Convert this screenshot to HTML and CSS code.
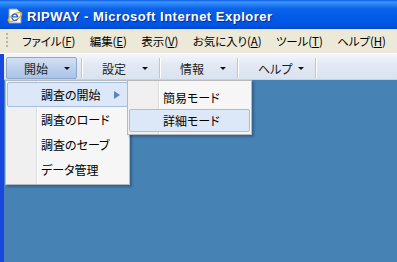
FILE: index.html
```html
<!DOCTYPE html>
<html lang="ja">
<head>
  <meta charset="UTF-8" />
  <title>RIPWAY - Microsoft Internet Explorer</title>
  <link rel="stylesheet" href="styles.css">
</head>
<body>
  <div class="window">
    <div class="titlebar">
      <svg class="ie-icon" width="16" height="16" viewBox="0 0 16 16">
        <path d="M2 1h8l4 4v10H2z" fill="#fff" stroke="#8a9bb8" stroke-width="1"/>
        <ellipse cx="8" cy="9" rx="7.5" ry="3" fill="none" stroke="#f2b01e" stroke-width="1.4" transform="rotate(-30 8 9)"/>
        <path d="M4.5 9.5h7c0-2.4-1.6-4-3.6-4S4.3 7.2 4.3 9.3c0 2.2 1.6 3.9 3.7 3.9 1.5 0 2.6-.7 3.2-1.9H9.6c-.4.5-.9.8-1.6.8-1.1 0-1.9-.8-2-1.9zm1.4-1.3c.2-.9.9-1.5 1.9-1.5s1.7.6 1.8 1.5z" fill="#1d64d8"/>
      </svg>
      <span class="title-text">RIPWAY - Microsoft Internet Explorer</span>
    </div>

    <div class="menubar">
      <span class="grip"></span>
      <span class="menu-item">ファイル(<u>F</u>)</span>
      <span class="menu-item">編集(<u>E</u>)</span>
      <span class="menu-item">表示(<u>V</u>)</span>
      <span class="menu-item">お気に入り(<u>A</u>)</span>
      <span class="menu-item">ツール(<u>T</u>)</span>
      <span class="menu-item">ヘルプ(<u>H</u>)</span>
    </div>

    <div class="frame">
      <div class="toolbar">
        <div class="tool-btn active"><span>開始</span><i class="caret"></i></div>
        <span class="sep"></span>
        <div class="tool-btn"><span>設定</span><i class="caret"></i></div>
        <span class="sep"></span>
        <div class="tool-btn"><span>情報</span><i class="caret"></i></div>
        <span class="sep"></span>
        <div class="tool-btn"><span>ヘルプ</span><i class="caret"></i></div>
        <span class="sep"></span>
      </div>

      <div class="content">
        <ul class="popup main-menu">
          <li class="hover">調査の開始<i class="sub-arrow"></i></li>
          <li>調査のロード</li>
          <li>調査のセーブ</li>
          <li>データ管理</li>
        </ul>
        <ul class="popup sub-menu">
          <li>簡易モード</li>
          <li class="hover">詳細モード</li>
        </ul>
      </div>
    </div>
  </div>
</body>
</html>
```

FILE: styles.css
```css
body {
  margin: 0;
  width: 397px;
  height: 262px;
  overflow: hidden;
  font-family: "Noto Sans CJK JP", sans-serif;
  font-size: 12px;
  font-feature-settings: "palt";
  color: #000;
}

.window {
  display: flex;
  flex-direction: column;
  height: 262px;
}

.titlebar {
  height: 29px;
  flex-shrink: 0;
  display: flex;
  align-items: center;
  padding: 3px 0 0 7px;
  box-sizing: border-box;
  background: linear-gradient(180deg, #0a5ae8 0%, #3d95ff 7%, #2a84f7 15%, #0c62ea 30%, #0058e6 65%, #0055e2 88%, #0046cc 100%);
}

.ie-icon {
  margin-right: 4px;
}

.title-text {
  font-family: "Liberation Sans", Arial, sans-serif;
  font-weight: bold;
  font-size: 13px;
  letter-spacing: 0.5px;
  color: #fff;
  text-shadow: 1px 1px #0b2a8e;
  font-feature-settings: normal;
  white-space: nowrap;
}

.menubar {
  height: 25px;
  flex-shrink: 0;
  display: flex;
  align-items: center;
  background: #ece9d8;
  border-bottom: 1px solid #fff;
  box-sizing: border-box;
  white-space: nowrap;
}

.grip {
  width: 2px;
  height: 16px;
  flex-shrink: 0;
  margin: 0 14px 0 6px;
  background: repeating-linear-gradient(180deg, #b8b4a2 0 2px, transparent 2px 4px);
}

.menu-item {
  flex-shrink: 0;
  margin-right: 14.5px;
  font-size: 11.5px;
  letter-spacing: -0.1px;
}

.frame {
  flex: 1;
  display: flex;
  flex-direction: column;
  border-left: 4px solid #1846e0;
}

.toolbar {
  height: 26px;
  flex-shrink: 0;
  display: flex;
  align-items: flex-start;
  padding: 3px 0 0 2px;
  background: linear-gradient(180deg, #f3f6fb 0%, #e3eaf5 40%, #d9e2ef 100%);
  border-bottom: 1px solid #c6d2e3;
  box-sizing: border-box;
}

.tool-btn {
  width: 71px;
  height: 22px;
  display: flex;
  align-items: center;
  padding: 0 6px 0 17px;
  box-sizing: border-box;
  border: 1px solid transparent;
  border-radius: 2px;
  color: #222;
}

.tool-btn.active {
  background: linear-gradient(180deg, #d3e0f3 0%, #bfd2ee 45%, #a9c3e8 100%);
  border-color: #8ea8cc;
}

.caret {
  margin-left: auto;
  width: 0;
  height: 0;
  border-left: 3px solid transparent;
  border-right: 3px solid transparent;
  border-top: 3px solid #111;
}

.sep {
  width: 1px;
  height: 20px;
  margin: 1px 1px 0 4px;
  background: #b9c5d8;
  border-right: 1px solid #fff;
}

.content {
  flex: 1;
  position: relative;
  background: #4682b4;
}

.popup {
  position: absolute;
  top: 0;
  margin: 0;
  list-style: none;
  background: linear-gradient(90deg, #f0f0f0 0 30px, #dcdcdc 30px 31px, #fff 31px 32px, #f6f6f6 32px);
  border: 1px solid #b9b9b9;
  box-shadow: 2px 2px 2px rgba(20, 40, 70, 0.35);
}

.popup li {
  display: flex;
  align-items: center;
  padding-left: 33px;
  border: 1px solid transparent;
  margin: 0 1px;
}

.popup li.hover {
  background: #dce7f7;
  border-color: #a6bedf;
  border-radius: 2px;
}

.main-menu {
  left: 1px;
  width: 123px;
  padding: 1px 0 2px;
}

.main-menu li {
  height: 23px;
}

.sub-menu {
  left: 123px;
  width: 123px;
  padding: 5px 0 2px;
}

.sub-menu li {
  height: 21px;
}

.sub-arrow {
  margin-left: auto;
  margin-right: 7px;
  width: 0;
  height: 0;
  border-top: 4.5px solid transparent;
  border-bottom: 4.5px solid transparent;
  border-left: 6px solid #5684c6;
}
```
